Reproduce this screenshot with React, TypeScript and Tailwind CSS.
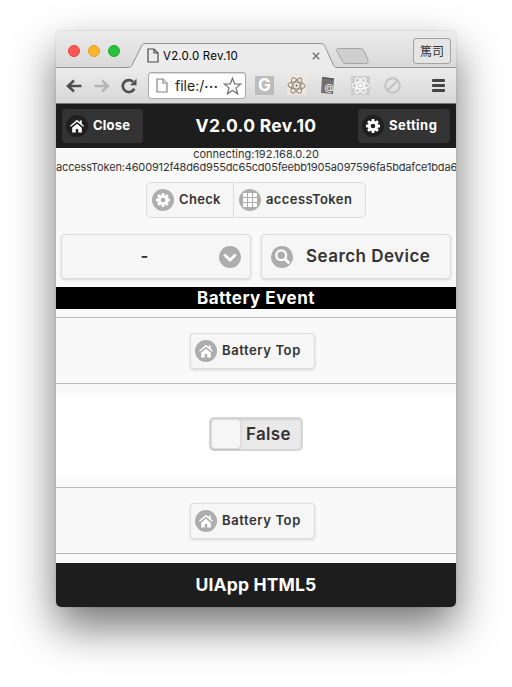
import type { ReactNode } from "react";

function HomeIcon() {
  return (
    <svg width="14" height="14" viewBox="0 0 14 14" fill="currentColor">
      <path d="M7 4.700 2.200 8.700v4.900h3.600V10h2.400v3.600h3.600V8.700z" />
      <path d="M7 .8 0 6.800l.9 1L7 2.800l6.100 5 .9-1-2.200-1.900V1.400H9.800v1.800z" />
    </svg>
  );
}

const teeth = [0, 45, 90, 135, 180, 225, 270, 315];

function GearIcon() {
  return (
    <svg width="14" height="14" viewBox="0 0 14 14" fill="currentColor">
      <circle cx="7" cy="7" r="3.75" fill="none" stroke="currentColor" strokeWidth="2.9" />
      {teeth.map((a) => (
        <rect key={a} x="5.6" y="0" width="2.8" height="3" rx="0.5" transform={`rotate(${a} 7 7)`} />
      ))}
    </svg>
  );
}

function GridIcon() {
  return (
    <svg width="14" height="14" viewBox="0 0 14 14" fill="currentColor">
      {[0, 5, 10].map((y) => [0, 5, 10].map((x) => <rect key={`${x}-${y}`} x={x} y={y} width="4" height="4" />))}
    </svg>
  );
}

function ChevronIcon() {
  return (
    <svg width="14" height="14" viewBox="0 0 14 14" fill="none" stroke="currentColor" strokeWidth="2.8">
      <path d="m1.3 4.5 5.7 5.6 5.7-5.6" />
    </svg>
  );
}

function SearchIcon() {
  return (
    <svg width="15" height="15" viewBox="0 0 14 14" fill="none" stroke="currentColor">
      <circle cx="5.8" cy="5.8" r="4.6" strokeWidth="2.1" />
      <path d="m9.3 9.3 4 4" strokeWidth="2.7" />
    </svg>
  );
}

function Disc({ children, dark = false }: { children: ReactNode; dark?: boolean }) {
  return (
    <span className={`flex size-[22px] shrink-0 items-center justify-center rounded-full text-white ${dark ? "bg-[#1f1f1f]" : "bg-[#adadad]"}`}>
      {children}
    </span>
  );
}

function PageIcon({ dark = false }: { dark?: boolean }) {
  return (
    <svg className="shrink-0" width="12" height="15" viewBox="0 0 12 15" fill={dark ? "none" : "#fafafa"} stroke={dark ? "#4a4a4a" : "#838383"} strokeWidth="1.2">
      <path d="M1 1h6l4 4v9H1z" />
      <path d="M7 1v4h4" />
    </svg>
  );
}

function TabStrip() {
  return (
    <div className="relative flex h-[37px] items-start bg-gradient-to-b from-[#ebebeb] to-[#d9d9d9]">
      <svg className="absolute inset-0" width="400" height="37" viewBox="0 0 400 37">
        <path d="M0 36.5H71C75 36.5 76 35 77.200 32L84.500 17C85.700 14 86.500 12.500 90 12.500H264C267.500 12.500 268.500 14 269.500 16.500L276.500 32C278 35.500 279 36.500 282 36.500H400V37H0z" fill="#ececec" />
        <path d="M0 36.500H71C75 36.500 76 35 77.200 32L84.500 17C85.700 14 86.500 12.500 90 12.500H264C267.500 12.500 268.500 14 269.500 16.500L276.500 32C278 35.500 279 36.500 282 36.500H400" fill="none" stroke="#929292" />
        <path d="M282.500 17.500h22q3 0 4 3l3.500 9q1 3-2 3h-20q-3 0-4-3l-5-9q-1.500-3 1.500-3z" fill="#cfcfcf" stroke="#a5a5a5" />
      </svg>
      <div className="relative ml-3 mt-[14px] flex gap-2">
        <span className="size-3 rounded-full border border-[#e2463f] bg-[#fc5753]" />
        <span className="size-3 rounded-full border border-[#e0a02a] bg-[#fdb529]" />
        <span className="size-3 rounded-full border border-[#1fa932] bg-[#27c238]" />
      </div>
      <div className="relative ml-[27px] mt-[17px] flex w-[173px] items-center">
        <PageIcon dark />
        <span className="ml-[4px] whitespace-nowrap text-[11.5px] leading-[14px] tracking-[0.2px] text-black">V2.0.0 Rev.10</span>
        <svg className="ml-auto" width="8" height="8" viewBox="0 0 8 8" stroke="#747474" strokeWidth="1.5">
          <path d="m.8.8 6.400 6.400M7.200.8.8 7.200" />
        </svg>
      </div>
      <div className="relative ml-auto mr-[5px] mt-[7px] flex h-[26px] w-[38px] items-center justify-center rounded-[3px] border border-[#a3a3a3] bg-[#e5e5e5] font-['Noto_Sans_CJK_JP',sans-serif] text-[12px] text-[#333]">
        篤司
      </div>
    </div>
  );
}

function Toolbar() {
  return (
    <div className="flex h-9 items-center border-b border-[#777] bg-gradient-to-b from-[#ececec] to-[#d7d7d7] pl-[10px] pr-[11px]">
      <svg className="shrink-0" width="16" height="14" viewBox="0 0 16 14" fill="none" stroke="#505050" strokeWidth="2.600">
        <path d="M15.500 7H2M8 1.500 2 7l6 5.500" />
      </svg>
      <svg className="ml-3 shrink-0" width="16" height="14" viewBox="0 0 16 14" fill="none" stroke="#b5b5b5" strokeWidth="2.400">
        <path d="M.5 7H14M8 1.500 14 7l-6 5.500" />
      </svg>
      <svg className="ml-[11px] shrink-0" width="16" height="16" viewBox="0 0 16 16" fill="none" stroke="#505050" strokeWidth="2.700">
        <path d="M13.300 10.600A6 6 0 1 1 12 3.700" />
        <path d="M15.500.8v6.400H9z" fill="#505050" stroke="none" />
      </svg>
      <div className="ml-[11px] flex h-[27px] w-[98px] shrink-0 items-center rounded-[3px] border border-[#a9a9a9] bg-white pl-[7px] pr-[3px] shadow-[inset_0_1px_1px_rgba(0,0,0,0.15)]">
        <PageIcon />
        <span className="ml-[7px] flex items-center whitespace-nowrap text-[14px] leading-4 text-[#222]">
          <span>file:/</span>
          <span className="text-[13px] font-semibold leading-4 tracking-[0.6px]">···</span>
        </span>
        <svg className="ml-auto shrink-0" width="19" height="18" viewBox="0 0 19 18" fill="#fff" stroke="#717171" strokeWidth="1.200">
          <path d="m9.500 1.200 2.200 5.600 6 .3-4.700 3.800 1.600 5.900-5.100-3.300-5.100 3.300L6 10.900 1.300 7.100l6-.3z" />
        </svg>
      </div>
      <span className="ml-[9px] flex size-[19px] shrink-0 items-center justify-center rounded-[1px] bg-[#bcbcbc] text-[17px] font-bold leading-none text-white">G</span>
      <svg className="ml-[13px] shrink-0" width="19" height="19" viewBox="0 0 19 19" fill="none" stroke="#92867b" strokeWidth="1">
        <path d="M0 0h19v19H0z" fill="#eee7dd" stroke="none" />
        <ellipse cx="9.500" cy="9.500" rx="8.600" ry="3.500" transform="rotate(5 9.500 9.500)" />
        <ellipse cx="9.500" cy="9.500" rx="8.600" ry="3.500" transform="rotate(62 9.500 9.500)" />
        <ellipse cx="9.500" cy="9.500" rx="8.600" ry="3.500" transform="rotate(122 9.500 9.500)" />
        <circle cx="9.500" cy="9.500" r="1" fill="#6b625a" stroke="none" />
      </svg>
      <svg className="ml-[14px] shrink-0" width="15" height="19" viewBox="0 0 15 19">
        <path d="m2 1 12 1.500-1 15.500L1 17z" fill="#707070" />
        <path d="m2 1 12 1.500v1.300L2 2.300z" fill="#555" />
        <text x="4.600" y="15.300" fontSize="9.500" fill="#fff" fontFamily="Inter">@</text>
      </svg>
      <svg className="ml-[16px] shrink-0" width="19" height="19" viewBox="0 0 19 19" fill="none" stroke="#fff" strokeWidth="1">
        <path d="M0 0h19v19H0z" fill="#cdcdcd" stroke="none" />
        <ellipse cx="9.500" cy="9.500" rx="8.600" ry="3.300" />
        <ellipse cx="9.500" cy="9.500" rx="8.600" ry="3.300" transform="rotate(60 9.500 9.500)" />
        <ellipse cx="9.500" cy="9.500" rx="8.600" ry="3.300" transform="rotate(120 9.500 9.500)" />
        <circle cx="9.500" cy="9.500" r="1.800" fill="#fff" stroke="none" />
      </svg>
      <svg className="ml-[13px] shrink-0" width="19" height="19" viewBox="0 0 19 19" fill="none" stroke="#c3c3c3" strokeWidth="2">
        <circle cx="9.500" cy="9.500" r="7.300" />
        <path d="m4.500 14.500 10-10" />
      </svg>
      <span className="ml-auto flex shrink-0 flex-col gap-[2px]">
        <span className="h-[3px] w-[13px] rounded-[1px] bg-[#444]" />
        <span className="h-[3px] w-[13px] rounded-[1px] bg-[#444]" />
        <span className="h-[3px] w-[13px] rounded-[1px] bg-[#444]" />
      </span>
    </div>
  );
}

function BatteryRow() {
  return (
    <div className="flex h-[67px] shrink-0 items-start justify-center border-y border-[#b8b8b8] pr-[7px] pt-[15px]">
      <button className="flex h-9 w-[125px] items-center gap-[5px] rounded-[4px] border border-[#ddd] bg-[#f6f6f6] pl-1 text-[13px] font-semibold shadow-[0_1px_3px_rgba(0,0,0,0.15)]">
        <Disc><HomeIcon /></Disc>
        <span className="whitespace-nowrap tracking-[0.6px]">Battery Top</span>
      </button>
    </div>
  );
}

export default function App() {
  return (
    <div className="h-[687px] w-[512px] overflow-hidden bg-white pl-[56px] pt-[31px] font-['Inter','Noto_Sans_CJK_JP',sans-serif] text-[#333]">
      <div className="h-[576px] w-[400px] rounded-[5px] shadow-[0_0_1px_rgba(0,0,0,0.5),0_20px_44px_rgba(0,0,0,0.55)]">
        <div className="flex h-full flex-col overflow-hidden rounded-[5px] bg-[#f9f9f9]">
          <TabStrip />
          <Toolbar />
          <header className="flex h-11 shrink-0 items-center justify-between bg-[#1d1d1d] px-[6px] text-white">
            <button className="flex h-[34px] w-[81px] items-center gap-[5px] rounded-[4px] bg-[#333] pl-1 text-[13px] font-bold">
              <Disc dark><HomeIcon /></Disc>
              <span className="tracking-[0.2px]">Close</span>
            </button>
            <h1 className="whitespace-nowrap pl-[11px] text-[17.5px] font-bold tracking-[0.32px]">V2.0.0 Rev.10</h1>
            <button className="flex h-[34px] w-[92px] items-center gap-[5px] rounded-[4px] bg-[#333] pl-1 text-[13px] font-bold">
              <Disc dark><GearIcon /></Disc>
              <span className="tracking-[0.45px]">Setting</span>
            </button>
          </header>
          <div className="h-[34px] shrink-0 whitespace-nowrap text-[11px] leading-[13px]">
            <p className="text-center">connecting:192.168.0.20</p>
            <p className="tracking-[-0.16px]">accessToken:4600912f48d6d955dc65cd05feebb1905a097596fa5bdafce1bda6</p>
          </div>
          <div className="ml-[90px] flex h-9 w-[220px] shrink-0 rounded-[5px] border border-[#ddd] bg-[#f6f6f6] text-[13px] font-semibold">
            <button className="flex w-[87px] items-center gap-[5px] border-r border-[#ddd] pl-[5px]">
              <Disc><GearIcon /></Disc>
              <span className="tracking-[0.3px]">Check</span>
            </button>
            <button className="flex flex-1 items-center gap-[5px] pl-[5px]">
              <Disc><GridIcon /></Disc>
              <span className="tracking-[0.4px]">accessToken</span>
            </button>
          </div>
          <div className="mt-4 flex h-[45px] shrink-0 gap-[10px] px-[5px] text-[17px] font-semibold">
            <button className="flex flex-1 items-center rounded-[4px] border border-[#ddd] bg-[#f6f6f6] pr-[9px] shadow-[0_1px_3px_rgba(0,0,0,0.15)]">
              <span className="flex-1 pl-[8px] text-center">-</span>
              <Disc><ChevronIcon /></Disc>
            </button>
            <button className="flex flex-1 items-center rounded-[4px] border border-[#ddd] bg-[#f6f6f6] pl-[9px] shadow-[0_1px_3px_rgba(0,0,0,0.15)]">
              <Disc><SearchIcon /></Disc>
              <span className="ml-[13px] whitespace-nowrap tracking-[0.45px]">Search Device</span>
            </button>
          </div>
          <h2 className="mb-2 mt-2 h-[22px] shrink-0 bg-black text-center text-[17px] font-bold leading-[22px] tracking-[0.5px] text-white">Battery Event</h2>
          <BatteryRow />
          <div className="mb-2 mt-[9px] flex h-[86px] shrink-0 justify-center bg-white pt-6">
            <div className="flex h-[34px] w-[94px] items-center rounded-[5px] border-2 border-[#d6d6d6] bg-[#e9e9e9] shadow-[inset_0_1px_2px_rgba(0,0,0,0.12)]">
              <span className="h-[30px] w-[30px] rounded-[4px] border border-[#ddd] bg-[#f6f6f6] shadow-[0_1px_2px_rgba(0,0,0,0.12)]" />
              <span className="ml-[5px] pt-px text-[17px] font-semibold tracking-[0.3px]">False</span>
            </div>
          </div>
          <BatteryRow />
          <footer className="mt-[9px] flex flex-1 items-center justify-center bg-[#1d1d1d] text-[17.5px] font-bold tracking-[0.15px] text-white">UIApp HTML5</footer>
        </div>
      </div>
    </div>
  );
}
